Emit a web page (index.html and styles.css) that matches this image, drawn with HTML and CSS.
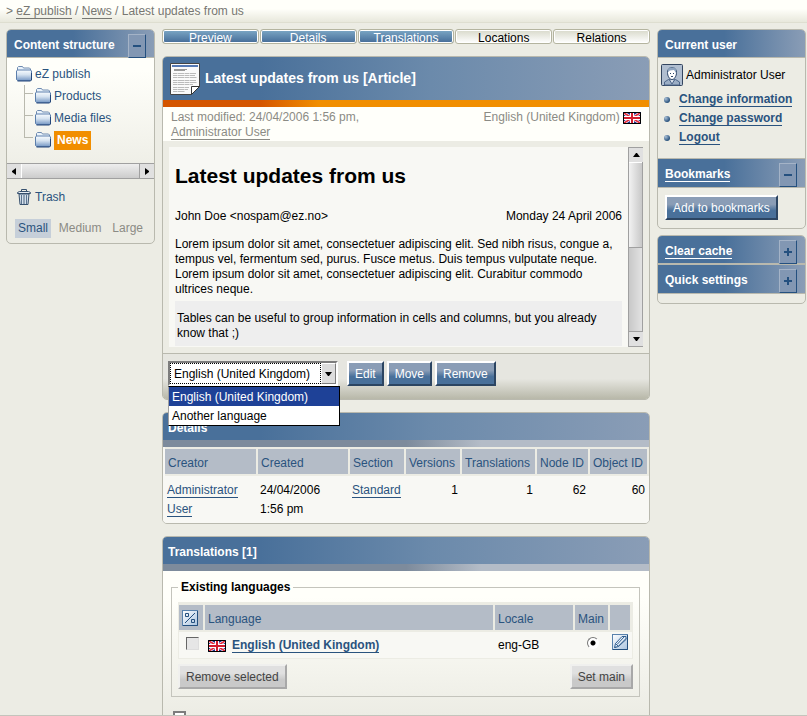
FILE: index.html
```html
<!DOCTYPE html>
<html lang="en">
<head>
    <meta charset="UTF-8">
    <meta name="viewport" content="width=device-width, initial-scale=1.0">
    <title>Latest updates from us - eZ publish</title>
    <link rel="stylesheet" href="styles.css">
</head>
<body>
    <svg class="sprites" aria-hidden="true">
        <defs>
            <linearGradient id="folder-fill" x1="0" y1="0" x2="0" y2="1">
                <stop offset="0" stop-color="#f8fcff"/>
                <stop offset="0.45" stop-color="#d5e2f0"/>
                <stop offset="1" stop-color="#7698c4"/>
            </linearGradient>
            <linearGradient id="box-fill" x1="0" y1="0" x2="1" y2="1">
                <stop offset="0" stop-color="#ffffff"/>
                <stop offset="1" stop-color="#a9c4e0"/>
            </linearGradient>
        </defs>
        <symbol id="folder" viewBox="0 0 16 16">
            <path d="M1.500 4.500v-3l1-1h4l1 1.500h6l1 1v2" fill="#eaf3fb" stroke="#6f8bb0"/>
            <path d="M.5 5l1-1h13l1 1v8.500l-1 1h-13l-1-1z" fill="url(#folder-fill)" stroke="#5c7fac"/>
            <path d="M1.500 15h13l1-1V7" fill="none" stroke="#24477a"/>
        </symbol>
        <symbol id="trash" viewBox="0 0 14 16">
            <path d="M2 5h10l-1 10.500H3z" fill="#d5e0eb" stroke="#37516e"/>
            <path d="M4.500 6v9M9.500 6v9" stroke="#5b7590"/>
            <path d="M7 6v9" stroke="#49637f"/>
            <path d="M.5 4.500v-1l2-1h9l2 1v1z" fill="#e8eff5" stroke="#37516e"/>
            <path d="M4.500 2V.500h5V2" fill="none" stroke="#37516e"/>
        </symbol>
        <symbol id="article" viewBox="0 0 30 32">
            <path d="M.5.500h29v23l-8 8H.500z" fill="#fafafa" stroke="#444"/>
            <path d="M2 3h26" stroke="#5579b4" stroke-width="2"/>
            <path d="M4 6.500h13M4 7.500h11" stroke="#999"/>
            <path d="M3 10.500h23M3 12.500h22M3 14.500h24M3 17.500h23M3 19.500h24M3 21.500h20M3 24.500h16M3 26.500h15M3 28.500h12" stroke="#bbb" stroke-dasharray="4 .5 7 .5"/>
            <path d="M21.500 31.500v-8h8z" fill="#fff" stroke="#333"/>
        </symbol>
        <symbol id="flag-gb" viewBox="0 0 18 12">
            <path d="M0 0h18v12H0z" fill="#1c2f8f"/>
            <path d="M1 1l16 10M17 1L1 11" stroke="#fff" stroke-width="3"/>
            <path d="M1 1l16 10M17 1L1 11" stroke="#e02a3c" stroke-width="1.500"/>
            <path d="M9 0v12M0 6h18" stroke="#fff" stroke-width="4"/>
            <path d="M9 0v12M0 6h18" stroke="#d21c2e" stroke-width="2"/>
            <path d="M.5.500h17v11H.500z" fill="none" stroke="#000"/>
        </symbol>
        <symbol id="user" viewBox="0 0 22 22">
            <rect x=".5" y=".5" width="21" height="21" rx="1" fill="#b0bed0" stroke="#33455f"/>
            <path d="M3.500 21v-3l4-2.500 3.500 2 3.500-2 4 2.500v3z" fill="#9caec5" stroke="#4d668a"/>
            <path d="M8 15l3 5 3-5z" fill="#d5deea" stroke="#4d668a"/>
            <path d="M6.500 8.500c0-3.500 2-5 4.500-5s4.500 1.500 4.500 5-2 7-4.500 7-4.500-3.500-4.500-7z" fill="#fff" stroke="#2b4468"/>
            <path d="M7 8V5.500l2-2h4l2 2V9l-2-3-4 .5z" fill="#8fa5c0"/>
            <path d="M9 9.500h1M12 9.500h1M10 12.500h2" stroke="#2b4468"/>
        </symbol>
        <symbol id="toggle" viewBox="0 0 16 16">
            <rect x=".5" y=".5" width="15" height="15" fill="url(#box-fill)" stroke="#5982ac"/>
            <path d="M15.500 1v14.500H1" fill="none" stroke="#24507f"/>
            <path d="M3.500 3.500h3v3h-3zM9.500 9.500h3v3h-3z" fill="none" stroke="#24507f"/>
            <path d="M13 3L3 13" stroke="#24507f"/>
        </symbol>
        <symbol id="edit" viewBox="0 0 16 16">
            <rect x=".5" y=".5" width="15" height="15" fill="url(#box-fill)" stroke="#5982ac"/>
            <path d="M15.500 1v14.500H1" fill="none" stroke="#24507f"/>
            <path d="M2.500 13.500l1-4 6.500-7h4v3l-7.500 7z" fill="#e6eff8" stroke="#315f91"/>
            <path d="M5 10.500l7-7.500M6.500 12L14 4.500M3.500 9.500l3 3M2.500 13.500l2-.5" stroke="#315f91" fill="none"/>
        </symbol>
        <symbol id="arrow-up" viewBox="0 0 7 4"><path d="M0 4h7L4 0H3z" fill="#000"/></symbol>
        <symbol id="arrow-down" viewBox="0 0 7 4"><path d="M0 0h7L4 4H3z" fill="#000"/></symbol>
        <symbol id="arrow-left" viewBox="0 0 4 7"><path d="M4 0v7L0 4V3z" fill="#000"/></symbol>
        <symbol id="arrow-right" viewBox="0 0 4 7"><path d="M0 0v7l4-3V3z" fill="#000"/></symbol>
    </svg>

    <nav class="path">&gt; <a href="#">eZ publish</a> / <a href="#">News</a> / Latest updates from us</nav>

    <div class="columns">
        <aside class="box left-menu">
            <div class="box-header">
                <h2>Content structure</h2>
                <button type="button" class="toggle minus" aria-label="Collapse"></button>
            </div>
            <div class="tree">
                <a href="#"><svg class="icon16"><use href="#folder"/></svg>eZ publish</a>
                <ul>
                    <li><a href="#"><svg class="icon16"><use href="#folder"/></svg>Products</a></li>
                    <li><a href="#"><svg class="icon16"><use href="#folder"/></svg>Media files</a></li>
                    <li class="last"><a href="#"><svg class="icon16"><use href="#folder"/></svg><span class="current">News</span></a></li>
                </ul>
            </div>
            <div class="hscroll">
                <button type="button" aria-label="Scroll left"><svg width="4" height="7"><use href="#arrow-left"/></svg></button>
                <div class="thumb"></div>
                <button type="button" aria-label="Scroll right"><svg width="4" height="7"><use href="#arrow-right"/></svg></button>
            </div>
            <a class="trash" href="#"><svg width="14" height="16"><use href="#trash"/></svg>Trash</a>
            <div class="sizes">
                <span class="selected">Small</span>
                <a href="#">Medium</a>
                <a href="#">Large</a>
            </div>
        </aside>

        <main>
            <nav class="tabs">
                <a class="on" href="#">Preview</a>
                <a class="on" href="#">Details</a>
                <a class="on" href="#">Translations</a>
                <a href="#">Locations</a>
                <a href="#">Relations</a>
            </nav>

            <section class="box preview">
                <div class="title">
                    <svg width="30" height="32"><use href="#article"/></svg>
                    <h1>Latest updates from us [Article]</h1>
                </div>
                <div class="orange-line"></div>
                <div class="info">
                    <p>Last modified: 24/04/2006 1:56 pm, <a href="#">Administrator User</a></p>
                    <p class="language">English (United Kingdom) <svg class="flag"><use href="#flag-gb"/></svg></p>
                </div>
                <div class="viewport">
                    <article>
                        <h2>Latest updates from us</h2>
                        <div class="byline">
                            <span>John Doe &lt;nospam@ez.no&gt;</span>
                            <span>Monday 24 April 2006</span>
                        </div>
                        <p>Lorem ipsum dolor sit amet, consectetuer adipiscing elit. Sed nibh risus, congue a, tempus vel, fermentum sed, purus. Fusce metus. Duis tempus vulputate neque. Lorem ipsum dolor sit amet, consectetuer adipiscing elit. Curabitur commodo ultrices neque.</p>
                        <div class="cell">Tables can be useful to group information in cells and columns, but you already know that ;)</div>
                    </article>
                    <div class="vscroll">
                        <button type="button" aria-label="Scroll up"><svg width="7" height="4"><use href="#arrow-up"/></svg></button>
                        <div class="thumb"></div>
                        <div class="track"></div>
                        <button type="button" aria-label="Scroll down"><svg width="7" height="4"><use href="#arrow-down"/></svg></button>
                    </div>
                </div>
                <form class="controls">
                    <div class="dropdown">
                        <select aria-label="Language">
                            <option>English (United Kingdom)</option>
                            <option>Another language</option>
                        </select>
                        <span class="arrow"><svg width="7" height="4"><use href="#arrow-down"/></svg></span>
                        <ul class="options" role="listbox" aria-label="Language">
                            <li role="option" aria-selected="true">English (United Kingdom)</li>
                            <li role="option" aria-selected="false">Another language</li>
                        </ul>
                    </div>
                    <button type="button" class="button">Edit</button>
                    <button type="button" class="button">Move</button>
                    <button type="button" class="button">Remove</button>
                </form>
            </section>

            <section class="box">
                <div class="section-header"><h2>Details</h2></div>
                <table class="list details">
                    <thead>
                        <tr>
                            <th>Creator</th>
                            <th class="created">Created</th>
                            <th class="section">Section</th>
                            <th class="versions">Versions</th>
                            <th class="translations">Translations</th>
                            <th class="node">Node ID</th>
                            <th class="object">Object ID</th>
                        </tr>
                    </thead>
                    <tbody>
                        <tr>
                            <td><a href="#">Administrator User</a></td>
                            <td>24/04/2006<br>1:56 pm</td>
                            <td><a href="#">Standard</a></td>
                            <td class="number">1</td>
                            <td class="number">1</td>
                            <td class="number">62</td>
                            <td class="number">60</td>
                        </tr>
                    </tbody>
                </table>
            </section>

            <section class="box translations-box">
                <div class="section-header"><h2>Translations [1]</h2></div>
                <form>
                    <fieldset>
                        <legend>Existing languages</legend>
                        <table class="list languages">
                            <thead>
                                <tr>
                                    <th class="tick"><svg class="icon16"><use href="#toggle"/></svg></th>
                                    <th>Language</th>
                                    <th class="locale">Locale</th>
                                    <th class="main">Main</th>
                                    <th class="edit"></th>
                                </tr>
                            </thead>
                            <tbody>
                                <tr>
                                    <td class="tick"><input type="checkbox" aria-label="Select English (United Kingdom)" disabled></td>
                                    <td><svg class="flag"><use href="#flag-gb"/></svg><a class="strong" href="#">English (United Kingdom)</a></td>
                                    <td>eng-GB</td>
                                    <td class="main"><input type="radio" name="main" aria-label="Main language" checked></td>
                                    <td class="edit"><a class="plain" href="#" aria-label="Edit"><svg class="icon16"><use href="#edit"/></svg></a></td>
                                </tr>
                            </tbody>
                        </table>
                        <div class="buttons">
                            <button type="button" class="button gray">Remove selected</button>
                            <button type="button" class="button gray">Set main</button>
                        </div>
                    </fieldset>
                    <input class="always" type="checkbox" aria-label="Use the main language">
                </form>
            </section>
        </main>

        <aside class="right-menu">
            <div class="box">
                <div class="box-header"><h2>Current user</h2></div>
                <div class="user">
                    <p><svg width="22" height="22"><use href="#user"/></svg>Administrator User</p>
                    <ul>
                        <li><a href="#">Change information</a></li>
                        <li><a href="#">Change password</a></li>
                        <li><a href="#">Logout</a></li>
                    </ul>
                </div>
                <div class="box-header next">
                    <h2><a href="#">Bookmarks</a></h2>
                    <button type="button" class="toggle minus" aria-label="Collapse"></button>
                </div>
                <div class="bookmarks"><button type="button" class="button">Add to bookmarks</button></div>
            </div>
            <div class="box tools">
                <div class="box-header">
                    <h2><a href="#">Clear cache</a></h2>
                    <button type="button" class="toggle plus" aria-label="Expand"></button>
                </div>
                <div class="box-header next">
                    <h2>Quick settings</h2>
                    <button type="button" class="toggle plus" aria-label="Expand"></button>
                </div>
            </div>
        </aside>
    </div>
</body>
</html>
```
FILE: styles.css
```css
* {
    box-sizing: border-box;
}
body {
    display: flex;
    flex-direction: column;
    height: 100vh;
    margin: 0;
    overflow: hidden;
    border-bottom: 1px solid #c4c4bc;
    background: #ecece4;
    color: #000;
    font: 12px/15px "Liberation Sans", Arial, sans-serif;
}
h1, h2, p, ul {
    margin: 0;
    padding: 0;
}
ul {
    list-style: none;
}
h2 {
    font-size: 12px;
}
a {
    color: #2a537e;
    text-decoration: none;
    border-bottom: 1px solid;
}
button, select, input {
    margin: 0;
    padding: 0;
    font: inherit;
}
.sprites {
    position: absolute;
    width: 0;
    height: 0;
}
.icon16 {
    width: 16px;
    height: 16px;
}
.flag {
    width: 18px;
    height: 12px;
}

/* path */
.path {
    flex: none;
    padding: 4px 6px 3px;
    border-bottom: 1px solid #deded0;
    background: linear-gradient(#fffffa 40%, #e8e8dc);
    color: #777772;
}
.path a {
    color: #777772;
}

.columns {
    display: grid;
    grid-template-columns: 149px minmax(0, 1fr) 149px;
    gap: 7px;
    align-items: start;
    flex: 1;
    min-height: 0;
    padding: 6px 1px 0 6px;
    overflow: hidden;
}

/* boxes */
.box {
    border: 1px solid #b9b9ae;
    border-radius: 5px;
}
.box-header {
    display: flex;
    justify-content: space-between;
    height: 28px;
    padding: 4px 8px 0 7px;
    border-radius: 4px 4px 0 0;
    border-bottom: 1px solid #b9b9ae;
    background: linear-gradient(to right, #49709a 45%, #8a9db6);
    color: #fff;
}
.box-header.next {
    height: 30px;
    border-top: 1px solid #b9b9ae;
    border-radius: 0;
}
.box-header h2 {
    padding-top: 4px;
}
.box-header a {
    color: #fff;
}
.toggle {
    display: grid;
    place-items: center;
    width: 18px;
    height: 24px;
    border: 1px solid;
    border-color: #a4b3c7 #24507f #24507f #a4b3c7;
    background: #8297b3;
    color: #24507f;
}
.toggle::before {
    content: "";
    width: 8px;
    height: 2px;
    background: #24507f;
}
.toggle.plus::before {
    height: 8px;
    background: linear-gradient(#24507f, #24507f) center / 8px 2px no-repeat,
        linear-gradient(#24507f, #24507f) center / 2px 8px no-repeat;
}

/* left menu */
.left-menu {
    background: linear-gradient(#fffffa 40px, #ecece4 150px);
}
.left-menu a {
    border: 0;
}
.tree {
    height: 105px;
    padding: 5px 0 0 9px;
}
.tree a {
    display: flex;
    align-items: center;
    gap: 3px;
    height: 22px;
}
.tree ul {
    padding-left: 8px;
}
.tree li {
    display: flex;
    gap: 2px;
}
.tree li::before {
    content: "";
    width: 9px;
    height: 22px;
    background: linear-gradient(#b9b9ae, #b9b9ae) 0 0 / 1px 100% no-repeat,
        linear-gradient(#b9b9ae, #b9b9ae) 0 8px / 9px 1px no-repeat;
}
.tree li.last::before {
    height: 9px;
}
.current {
    padding: 2px 3px;
    background: #f18e00;
    color: #fff;
    font-weight: bold;
}
.hscroll {
    display: flex;
    height: 16px;
    border: solid #a0a0a0;
    border-width: 1px 0;
}
.hscroll button, .vscroll button {
    display: grid;
    place-items: center;
    width: 14px;
    height: 14px;
    border: 0;
    background: #e0e0e0;
}
.hscroll .thumb {
    flex: 1;
    border-left: 1px solid #fff;
    border-right: 1px solid #a0a0a0;
    background: linear-gradient(#eee, #ccc);
}
.trash {
    display: flex;
    align-items: center;
    gap: 4px;
    padding: 10px;
}
.sizes {
    display: flex;
    justify-content: space-between;
    padding: 4px 8px 5px;
}
.sizes > * {
    padding: 2px 3px;
    color: #8b8b85;
}
.sizes .selected {
    background: #c6cfd9;
    color: #2a537e;
}

/* tabs */
main {
    display: grid;
    grid-template-columns: minmax(0, 1fr);
    gap: 12px;
}
.tabs {
    display: flex;
    gap: 1px;
    height: 15px;
}
.tabs a {
    flex: 1;
    overflow: hidden;
    border: 1px solid #b4b49f;
    border-radius: 3px;
    box-shadow: inset 0 0 0 1px #fff;
    background: linear-gradient(#d8d9ca, #fff);
    color: #000;
    line-height: 16px;
    text-align: center;
}
.tabs .on {
    background: linear-gradient(#7da8c6, #446b97);
    color: #fff;
}

/* preview */
.title {
    display: flex;
    align-items: center;
    gap: 5px;
    height: 43px;
    padding-left: 7px;
    border-radius: 4px 4px 0 0;
    background: linear-gradient(to right, #49709a 20%, #6b8aab 55%, #8a9db6);
    color: #fff;
}
.title h1 {
    font-size: 14px;
}
.orange-line {
    height: 7px;
    background: linear-gradient(to right, #d45500 20%, #f18e00 32%);
}
.info {
    display: flex;
    justify-content: space-between;
    gap: 12px;
    padding: 3px 8px 1px;
    background: #fffffa;
    color: #8b8b85;
}
.info p:first-child {
    max-width: 205px;
}
.info a {
    color: #8b8b85;
}
.info .flag {
    vertical-align: middle;
}
.viewport {
    display: flex;
    gap: 6px;
    height: 200px;
    margin: 6px;
    overflow: hidden;
    background: #f8f8f4;
}
article {
    flex: 1;
    padding-left: 6px;
}
article h2 {
    padding: 17px 0 21px;
    font-size: 21px;
    line-height: 24px;
}
.byline {
    display: flex;
    justify-content: space-between;
    padding-bottom: 13px;
}
.cell {
    height: 45px;
    margin-top: 4px;
    padding: 10px 2px 0;
    background: #eee;
}
.vscroll {
    display: flex;
    flex-direction: column;
    width: 15px;
    border: 1px solid #a0a0a0;
}
.vscroll .thumb {
    height: 86px;
    border-top: 1px solid #fff;
    border-bottom: 1px solid #a0a0a0;
    background: linear-gradient(to right, #f2f2f2, #c8c8c8);
}
.vscroll .track {
    flex: 1;
    border-bottom: 1px solid #a0a0a0;
    background: linear-gradient(to right, #c8c8c8, #e2e2e2);
}
.controls {
    display: flex;
    gap: 3px;
    height: 46px;
    padding: 7px 5px;
    border-top: 1px solid #b9b9ae;
    border-radius: 0 0 4px 4px;
    background: linear-gradient(#e6e6e0 55%, #b8b8a9);
}
.dropdown {
    position: relative;
    display: flex;
    width: 170px;
    height: 25px;
    margin-right: 6px;
    border: 2px solid;
    border-color: #7d7d7d #fff #fff #7d7d7d;
    background: #fff;
}
.dropdown select {
    flex: 1;
    appearance: none;
    padding: 2px 3px 0;
    border: 1px dotted #000;
    border-radius: 0;
    outline: 0;
    background: #fff;
    color: #000;
}
.arrow {
    display: grid;
    place-items: center;
    width: 15px;
    border: 1px solid;
    border-color: #fff #7d7d7d #7d7d7d #fff;
    background: #ddd;
    pointer-events: none;
}
.options {
    position: absolute;
    top: 23px;
    left: -2px;
    z-index: 1;
    width: 172px;
    border: 1px solid #000;
    border-left-color: #a0a0a0;
    background: #fff;
}
.options li {
    padding: 3px 3px 1px;
}
.options li[aria-selected="true"] {
    background: #1e4197;
    color: #fff;
}
.button {
    height: 25px;
    padding: 2px 6px 0;
    border: 2px solid;
    border-color: #fff #2c4562 #2c4562 #fff;
    background: linear-gradient(#8a9db6 35%, #49709a 65%);
    color: #fff;
}
.button.gray {
    border-color: #f0f0ee #a8a8a8 #a8a8a8 #f0f0ee;
    background: linear-gradient(#e0e0e0 35%, #c9c9c9 65%);
    color: #444;
}

/* details and translations */
.section-header {
    padding: 8px 5px 4px;
    border-bottom: 7px solid;
    border-image: linear-gradient(to right, #7d8b9c 50%, #b4bcc7 65%) 7;
    border-width: 0 0 7px;
    background: linear-gradient(to right, #49709a 20%, #6b8aab 55%, #8a9db6);
    border-radius: 4px 4px 0 0;
    color: #fff;
}
.list {
    width: 100%;
    table-layout: fixed;
    border-spacing: 0;
    background: #f8f8f4;
}
.list th {
    height: 29px;
    padding: 3px 3px 0;
    border: solid #ecece4;
    border-width: 2px 2px 2px 0;
    background: #b4bcc7;
    color: #2a537e;
    font-weight: normal;
    text-align: left;
    white-space: nowrap;
}
.list td {
    padding: 5px 4px 4px 2px;
    line-height: 19px;
    vertical-align: top;
}
.list .number {
    text-align: right;
}
.details {
    padding-left: 2px;
    border-radius: 0 0 4px 4px;
}
.created {
    width: 92px;
}
.section, .versions {
    width: 56px;
}
.translations {
    width: 75px;
}
.node {
    width: 53px;
}
.object {
    width: 59px;
}
.translations-box {
    min-height: 300px;
    background: linear-gradient(#fffffa 60px, #ecece4 180px);
}
fieldset {
    margin: 9px 9px 0 8px;
    padding: 7px 6px;
    border: 1px solid #c4c4bc;
}
legend {
    padding: 0 3px;
    font-weight: bold;
}
.languages {
    border: 1px solid #ecece4;
}
.list .tick {
    width: 26px;
    padding: 0 0 0 3px;
}
.languages svg {
    display: inline-block;
    vertical-align: middle;
}
.languages td {
    height: 26px;
    padding: 4px 3px 0;
}
.languages .strong {
    margin-left: 6px;
    font-weight: bold;
}
.plain {
    border: 0;
}
.locale {
    width: 80px;
}
.main {
    width: 35px;
    text-align: center;
}
.list .edit {
    width: 22px;
    padding: 0 2px;
}
input[type="checkbox"] {
    appearance: none;
    display: block;
    width: 13px;
    height: 13px;
    border: 1px solid;
    border-color: #666 #ddd #ddd #666;
    background: #e6e6e6;
}
.list .tick input {
    margin: 5px 0 0 4px;
}
input[type="radio"] {
    appearance: none;
    display: block;
    width: 12px;
    height: 12px;
    margin: 1px auto 0;
    border: 1px solid;
    border-color: #777 #fff #fff #777;
    border-radius: 50%;
    background: radial-gradient(#000 2px, #fff 3px);
}
.buttons {
    display: flex;
    justify-content: space-between;
    padding-top: 5px;
}
input.always {
    margin: 14px 0 0 10px;
    border: 2px solid #7d7d7d;
    background: #fff;
}

/* right menu */
.right-menu {
    display: grid;
    gap: 6px;
}
.user {
    height: 100px;
    padding: 6px 3px;
}
.user p {
    display: flex;
    align-items: center;
    gap: 3px;
    padding-bottom: 4px;
}
.user li {
    display: flex;
    align-items: center;
    gap: 9px;
    height: 19px;
    padding-left: 3px;
    font-weight: bold;
}
.user li::before {
    content: "";
    width: 6px;
    height: 6px;
    border-radius: 50%;
    background: radial-gradient(circle at 30% 30%, #a9bfd6, #2a537e 70%);
}
.user li a, .box-header a {
    line-height: 13px;
}
.bookmarks {
    height: 40px;
    padding: 7px;
}
.tools {
    padding-bottom: 9px;
}
```
